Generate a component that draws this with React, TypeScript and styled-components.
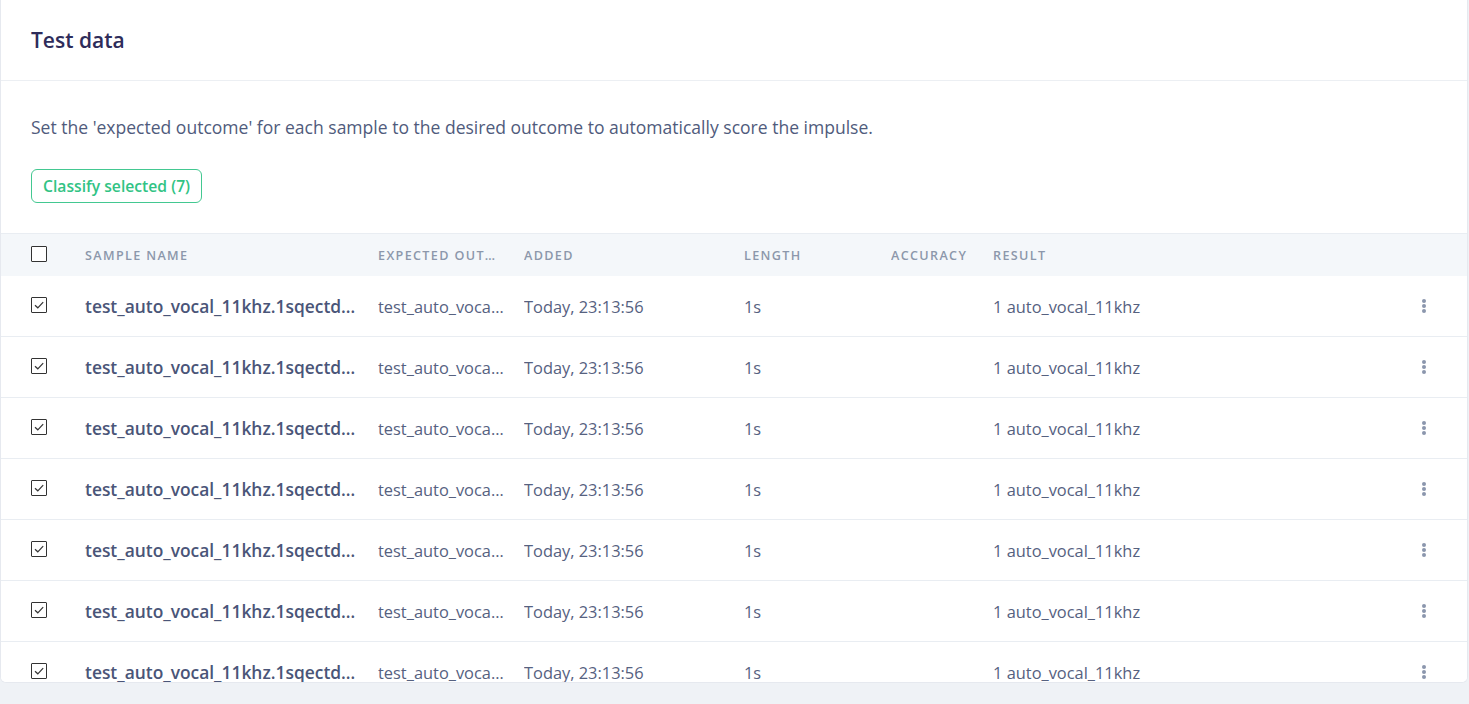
import React from "react";
import styled, { createGlobalStyle } from "styled-components";

const Global = createGlobalStyle`
  html, body { margin: 0; padding: 0; }
  body {
    background: #eff2f6;
    font-family: "Open Sans", "Noto Sans", sans-serif;
    overflow: hidden;
  }
`;

const Page = styled.div`
  height: 704px;
`;

const Card = styled.section`
  box-sizing: border-box;
  width: 1468px;
  height: 683px;
  background: #ffffff;
  border: 1px solid #e6e9ef;
  border-top: none;
  border-radius: 0 0 6px 6px;
  overflow: hidden;
`;

const CardHeader = styled.header`
  height: 80px;
  display: flex;
  align-items: center;
  padding: 0 30px;
  border-bottom: 1px solid #eceff3;
`;

const Title = styled.h2`
  margin: 0;
  font-size: 21px;
  font-weight: 600;
  color: #2e2c5a;
`;

const CardBody = styled.div`
  padding: 34px 30px 30px;
`;

const Description = styled.p`
  margin: 0 0 30px;
  font-size: 17.55px;
  line-height: 24px;
  color: #505b7c;
`;

const OutlineButton = styled.button`
  box-sizing: border-box;
  height: 34px;
  padding: 0 11px;
  border: 1px solid #43c891;
  border-radius: 6px;
  background: #fff;
  color: #31c384;
  font-family: inherit;
  font-size: 15.7px;
  font-weight: 600;
  cursor: pointer;
`;

const COLS = "54px 293px 146px 220px 147px 102px 1fr 24px";

const Row = styled.div<{ $head?: boolean }>`
  display: grid;
  grid-template-columns: ${COLS};
  align-items: center;
  box-sizing: border-box;
  padding: 0 31px 0 30px;
  height: ${(p) => (p.$head ? "43px" : "61px")};
  background: ${(p) => (p.$head ? "#f4f7fa" : "#fff")};
  border-top: ${(p) => (p.$head ? "1px solid #e9edf2" : "none")};
  border-bottom: ${(p) => (p.$head ? "none" : "1px solid #e9edf2")};
`;

const HeadCell = styled.div`
  font-size: 12.6px;
  font-weight: 600;
  letter-spacing: 1.35px;
  text-transform: uppercase;
  color: #8c97ab;
  white-space: nowrap;
  overflow: hidden;
  text-overflow: ellipsis;
  padding-right: 24px;
`;

const Cell = styled.div<{ $strong?: boolean }>`
  font-size: ${(p) => (p.$strong ? "17.4px" : "16.4px")};
  font-weight: ${(p) => (p.$strong ? 600 : 400)};
  color: ${(p) => (p.$strong ? "#4a5578" : "#56617f")};
  white-space: nowrap;
  overflow: hidden;
  text-overflow: ellipsis;
  padding-right: 18px;
`;

const Box = styled.span`
  display: inline-flex;
  align-items: center;
  justify-content: center;
  box-sizing: border-box;
  width: 16px;
  height: 16px;
  border: 1px solid #333;
  border-radius: 1px;
  background: #fff;
  margin-top: -2px;
`;

const IconCell = styled.div<{ $start?: boolean }>`
  display: flex;
  justify-content: ${(p) => (p.$start ? "flex-start" : "center")};
  align-items: center;
`;

const Checkbox = ({ checked }: { checked?: boolean }) => (
  <Box>
    {checked && (
      <svg width="12" height="12" viewBox="0 0 12 12">
        <path d="M2 6.2 L4.8 8.8 L10.2 3.2" fill="none" stroke="#333" strokeWidth="1.2" />
      </svg>
    )}
  </Box>
);

const Dots = () => (
  <svg width="6" height="16" viewBox="0 0 6 16">
    <circle cx="3" cy="3" r="2" fill="#8b96ad" />
    <circle cx="3" cy="8" r="2" fill="#8b96ad" />
    <circle cx="3" cy="13" r="2" fill="#8b96ad" />
  </svg>
);

const rows = Array.from({ length: 7 }, () => ({
  name: "test_auto_vocal_11khz.1sqectdabc.wav",
  expected: "test_auto_vocal_11khz",
  added: "Today, 23:13:56",
  length: "1s",
  accuracy: "",
  result: "1 auto_vocal_11khz",
}));

export default function App() {
  return (
    <Page>
      <Global />
      <Card>
        <CardHeader>
          <Title>Test data</Title>
        </CardHeader>
        <CardBody>
          <Description>
            Set the 'expected outcome' for each sample to the desired outcome to automatically score the impulse.
          </Description>
          <OutlineButton>Classify selected (7)</OutlineButton>
        </CardBody>
        <Row $head>
          <IconCell $start>
            <Checkbox />
          </IconCell>
          <HeadCell>Sample name</HeadCell>
          <HeadCell>Expected outcome</HeadCell>
          <HeadCell>Added</HeadCell>
          <HeadCell>Length</HeadCell>
          <HeadCell>Accuracy</HeadCell>
          <HeadCell>Result</HeadCell>
          <div />
        </Row>
        {rows.map((r, i) => (
          <Row key={i}>
            <IconCell $start>
              <Checkbox checked />
            </IconCell>
            <Cell $strong>{r.name}</Cell>
            <Cell>{r.expected}</Cell>
            <Cell>{r.added}</Cell>
            <Cell>{r.length}</Cell>
            <Cell>{r.accuracy}</Cell>
            <Cell>{r.result}</Cell>
            <IconCell>
              <Dots />
            </IconCell>
          </Row>
        ))}
      </Card>
    </Page>
  );
}
